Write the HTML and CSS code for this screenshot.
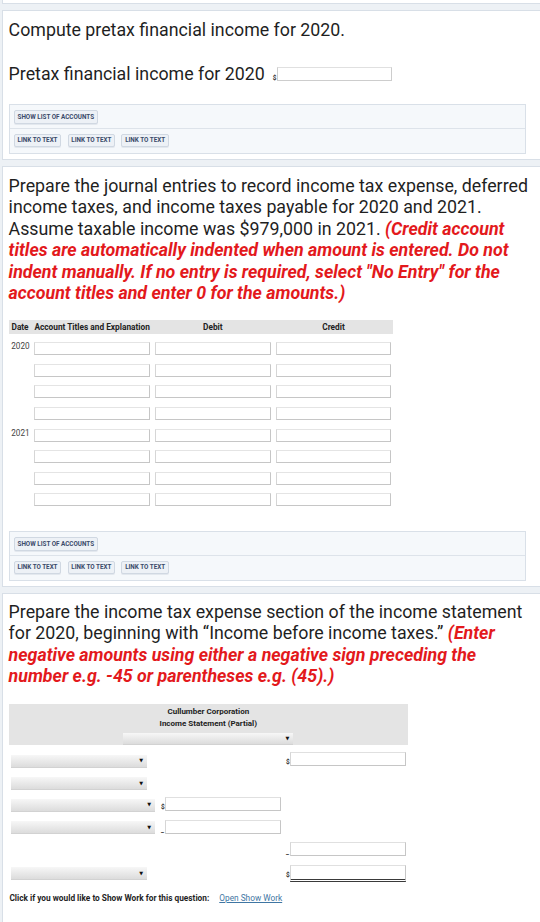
FILE: index.html
```html
<!DOCTYPE html>
<html lang="en">
<head>
<meta charset="utf-8">
<title>Income tax entries</title>
<link rel="stylesheet" href="styles.css">
</head>
<body>
<div class="prev"></div>

<section class="panel">
  <p class="q">Compute pretax financial income for 2020.</p>
  <div class="answer-line">
    <span class="q-inline">Pretax financial income for 2020</span>
    <span class="cur cur-pretax">$</span>
    <input class="inp inp-pretax" type="text">
  </div>
  <div class="toolbar">
    <div class="tb-row tb-top"><span class="btn btn-wide">SHOW LIST OF ACCOUNTS</span></div>
    <div class="tb-row tb-bottom">
      <span class="btn btn-link">LINK TO TEXT</span>
      <span class="btn btn-link">LINK TO TEXT</span>
      <span class="btn btn-link">LINK TO TEXT</span>
    </div>
  </div>
</section>

<section class="panel panel-next">
  <p class="q">Prepare the journal entries to record income tax expense, deferred income taxes, and income taxes payable for 2020 and 2021. Assume taxable income was $979,000 in 2021. <span class="red">(Credit account titles are automatically indented when amount is entered. Do not indent manually. If no entry is required, select "No Entry" for the account titles and enter 0 for the amounts.)</span></p>

  <div class="journal">
    <div class="jhead">
      <span class="jh-date">Date</span>
      <span class="jh-acct">Account Titles and Explanation</span>
      <span class="jh-num">Debit</span>
      <span class="jh-num">Credit</span>
    </div>
    <div class="jrow jrow-first"><span class="jdate">2020</span><input class="jin" type="text"><input class="jin" type="text"><input class="jin" type="text"></div>
    <div class="jrow"><span class="jdate"></span><input class="jin" type="text"><input class="jin" type="text"><input class="jin" type="text"></div>
    <div class="jrow"><span class="jdate"></span><input class="jin" type="text"><input class="jin" type="text"><input class="jin" type="text"></div>
    <div class="jrow"><span class="jdate"></span><input class="jin" type="text"><input class="jin" type="text"><input class="jin" type="text"></div>
    <div class="jrow"><span class="jdate">2021</span><input class="jin" type="text"><input class="jin" type="text"><input class="jin" type="text"></div>
    <div class="jrow"><span class="jdate"></span><input class="jin" type="text"><input class="jin" type="text"><input class="jin" type="text"></div>
    <div class="jrow"><span class="jdate"></span><input class="jin" type="text"><input class="jin" type="text"><input class="jin" type="text"></div>
    <div class="jrow"><span class="jdate"></span><input class="jin" type="text"><input class="jin" type="text"><input class="jin" type="text"></div>
  </div>

  <div class="toolbar toolbar-2">
    <div class="tb-row tb-top"><span class="btn btn-wide">SHOW LIST OF ACCOUNTS</span></div>
    <div class="tb-row tb-bottom">
      <span class="btn btn-link">LINK TO TEXT</span>
      <span class="btn btn-link">LINK TO TEXT</span>
      <span class="btn btn-link">LINK TO TEXT</span>
    </div>
  </div>
</section>

<section class="panel panel-next panel-last">
  <p class="q">Prepare the income tax expense section of the income statement for 2020, beginning with “Income before income taxes.” <span class="red">(Enter negative amounts using either a negative sign preceding the number e.g. -45 or parentheses e.g. (45).)</span></p>

  <div class="stmt">
    <div class="shead">
      <div class="stitle">Cullumber Corporation<br>Income Statement (Partial)</div>
      <div class="select select-head"><span class="arrow">▼</span></div>
    </div>

    <div class="srow srow-first">
      <div class="scell"><div class="select select-narrow"><span class="arrow">▼</span></div></div>
      <div class="scell scell-mid"></div>
      <div class="scell scell-right"><span class="cur">$</span><input class="sin sin-right" type="text"></div>
    </div>
    <div class="srow">
      <div class="scell"><div class="select select-narrow"><span class="arrow">▼</span></div></div>
      <div class="scell scell-mid"></div>
      <div class="scell scell-right"></div>
    </div>
    <div class="srow">
      <div class="scell"><div class="select select-wide"><span class="arrow">▼</span></div></div>
      <div class="scell scell-mid"><span class="cur">$</span><input class="sin sin-mid" type="text"></div>
      <div class="scell scell-right"></div>
    </div>
    <div class="srow">
      <div class="scell"><div class="select select-wide"><span class="arrow">▼</span></div></div>
      <div class="scell scell-mid"><span class="cur">_</span><input class="sin sin-mid" type="text"></div>
      <div class="scell scell-right"></div>
    </div>
    <div class="srow">
      <div class="scell"></div>
      <div class="scell scell-mid"></div>
      <div class="scell scell-right"><span class="cur">_</span><input class="sin sin-right" type="text"></div>
    </div>
    <div class="srow">
      <div class="scell"><div class="select select-narrow"><span class="arrow">▼</span></div></div>
      <div class="scell scell-mid"></div>
      <div class="scell scell-right"><span class="cur">$</span><input class="sin sin-right sin-total" type="text"></div>
    </div>
  </div>

  <div class="showwork">Click if you would like to Show Work for this question:<a class="sw-link" href="#">Open Show Work</a></div>
</section>
</body>
</html>
```

FILE: styles.css
```css
html, body {
  margin: 0;
  padding: 0;
}
body {
  background: #edf1f5;
  font-family: Roboto, "Liberation Sans", Arial, sans-serif;
  color: #1f1f1f;
  overflow: hidden;
  height: 922px;
}

.prev {
  height: 3px;
  background: #fff;
  margin-left: 2px;
  border-left: 1px solid #d8dfe7;
  border-bottom: 1px solid #d8dfe7;
}

.panel {
  background: #fff;
  margin: 5.5px 0 0 2px;
  border: 1px solid #d8dfe7;
  border-right: none;
  padding: 8px 0 5px 5.6px;
}
.panel-next {
  margin-top: 6px;
}
.panel-last {
  padding-top: 7px;
  height: 400px;
}

.q {
  margin: 0;
  width: 530px;
  font-size: 17.8px;
  line-height: 21.5px;
  color: #1f1f1f;
}
.red {
  color: #e3191c;
  font-weight: bold;
  font-style: italic;
}

.answer-line {
  display: flex;
  align-items: center;
  height: 21.5px;
  margin-top: 22.5px;
  font-size: 17.8px;
}
.q-inline {
  line-height: 21.5px;
}
.cur {
  font-size: 6.5px;
  font-weight: bold;
  color: #333;
  width: 4px;
  line-height: 7px;
  align-self: flex-end;
}
.cur-pretax {
  margin-left: 8px;
  margin-bottom: 2px;
  width: 4px;
}
.inp {
  box-sizing: border-box;
  height: 13.5px;
  padding: 0;
  margin: 0;
  background: #fff;
  border: 1px solid #cdcdcd;
  border-top-color: #e0e0e0;
}
.inp-pretax {
  width: 115px;
  margin-top: 1px;
}

/* toolbar */
.toolbar {
  margin: 19.5px 14px 0 0;
  background: #f5f8fb;
  border: 1px solid #d9e0e8;
}
.toolbar-2 {
  margin-top: 15.5px;
}
.tb-row {
  display: flex;
  gap: 6.3px;
  padding: 5.5px 4.2px 4px;
}
.tb-top {
  border-bottom: 1px solid #dde3ea;
}
.tb-bottom {
  padding: 5px 4.2px 5.6px;
}
.btn {
  box-sizing: border-box;
  height: 13.5px;
  display: flex;
  align-items: center;
  justify-content: center;
  background: #edf1f6;
  border: 1px solid #d0d8e2;
  border-radius: 2px;
  box-shadow: 0 1px 0 #e3e8ee;
  font-size: 6.3px;
  font-weight: bold;
  color: #3a4a6a;
  white-space: nowrap;
}
.btn-wide {
  width: 84px;
}
.btn-link {
  width: 47.5px;
}

/* journal */
.journal {
  margin-top: 16.3px;
  width: 384px;
}
.jhead,
.jrow {
  display: grid;
  grid-template-columns: 20.6px 115.5px 115.5px 115.5px;
  column-gap: 5.2px;
}
.jhead {
  height: 14px;
  align-items: center;
  background: #e4e4e4;
  font-size: 8.3px;
  font-weight: bold;
  color: #222;
}
.jh-date {
  padding-left: 2.9px;
}
.jh-num {
  text-align: center;
}
.jrow {
  height: 21.6px;
  align-items: start;
}
.jrow-first {
  margin-top: 8.4px;
}
.jdate {
  padding-left: 2.6px;
  font-size: 8.2px;
  line-height: 8px;
  padding-top: 0;
  color: #444;
}
.jin {
  box-sizing: border-box;
  width: 100%;
  height: 13px;
  margin: 0;
  padding: 0;
  background: #fff;
  border: 1px solid;
  border-color: #e4e4e4 #c6c6c6 #c6c6c6 #d6d6d6;
}

/* income statement */
.stmt {
  margin-top: 17.5px;
  width: 399.4px;
}
.shead {
  box-sizing: border-box;
  height: 40.7px;
  padding-top: 1.5px;
  background: #e4e4e4;
  text-align: center;
}
.stitle {
  font-size: 8px;
  font-weight: bold;
  line-height: 12.5px;
  color: #222;
}
.select {
  box-sizing: border-box;
  height: 13px;
  display: flex;
  align-items: center;
  justify-content: flex-end;
  padding-right: 4px;
  background: linear-gradient(#f7f7f7, #dcdcdc);
  border-bottom: 1px solid #d2d2d2;
}
.select-head {
  width: 170px;
  height: 11.5px;
  margin: 2.7px auto 0;
}
.select-narrow {
  width: 135.6px;
  margin-top: 2.5px;
}
.select-wide {
  width: 143.6px;
  margin-top: 1.2px;
}
.arrow {
  font-family: "DejaVu Sans", sans-serif;
  font-size: 5px;
  color: #111;
  line-height: 5px;
}
.srow {
  display: grid;
  grid-template-columns: 146.6px 126px 126px;
  height: 22.5px;
  padding-left: 2.8px;
}
.srow-first {
  margin-top: 7.5px;
}
.scell {
  display: flex;
  align-items: flex-start;
}
.scell-mid {
  padding-left: 3px;
}
.scell-right {
  padding-left: 2px;
}
.scell .cur {
  align-self: flex-start;
  margin-top: 7px;
}
.sin {
  box-sizing: border-box;
  height: 14px;
  margin: 0;
  padding: 0;
  background: #fff;
  border: 1px solid;
  border-color: #e0e0e0 #c6c6c6 #c6c6c6 #d6d6d6;
}
.sin-mid {
  width: 116px;
}
.sin-right {
  width: 115.6px;
}
.sin-total {
  height: 17px;
  border-bottom: 3px double #3a3a3a;
}

.showwork {
  margin-top: 4.5px;
  padding-left: 0.8px;
  font-size: 8.3px;
  line-height: 12px;
  font-weight: bold;
  color: #1e1e1e;
}
.sw-link {
  margin-left: 10px;
  font-weight: normal;
  color: #3f76a3;
  text-decoration: underline;
}
```
